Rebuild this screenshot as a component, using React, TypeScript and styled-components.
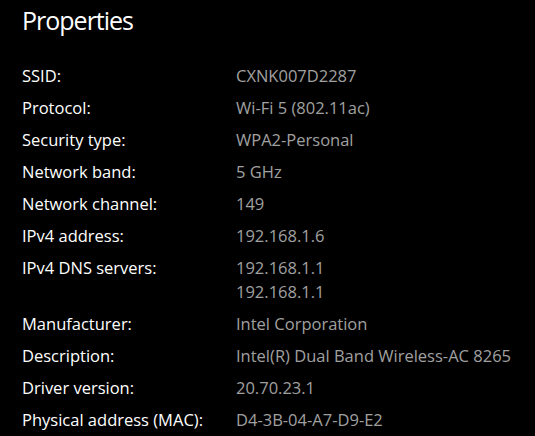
import styled, { createGlobalStyle } from "styled-components";

const GlobalStyle = createGlobalStyle`
  html, body {
    margin: 0;
    padding: 0;
    background: #000;
  }
  body {
    font-family: "Open Sans", "Noto Sans", "Liberation Sans", sans-serif;
  }
`;

const properties: { label: string; values: string[] }[] = [
  { label: "SSID:", values: ["CXNK007D2287"] },
  { label: "Protocol:", values: ["Wi-Fi 5 (802.11ac)"] },
  { label: "Security type:", values: ["WPA2-Personal"] },
  { label: "Network band:", values: ["5 GHz"] },
  { label: "Network channel:", values: ["149"] },
  { label: "IPv4 address:", values: ["192.168.1.6"] },
  { label: "IPv4 DNS servers:", values: ["192.168.1.1", "192.168.1.1"] },
  { label: "Manufacturer:", values: ["Intel Corporation"] },
  { label: "Description:", values: ["Intel(R) Dual Band Wireless-AC 8265"] },
  { label: "Driver version:", values: ["20.70.23.1"] },
  { label: "Physical address (MAC):", values: ["D4-3B-04-A7-D9-E2"] },
];

const App = () => {
  return (
    <>
      <GlobalStyle />
      <Page>
        <Title>Properties</Title>
        <Table>
          {properties.map(({ label, values }) => (
            <Row key={label}>
              <Label>{label}</Label>
              <Values>
                {values.map((v, i) => (
                  <Value key={i}>{v}</Value>
                ))}
              </Values>
            </Row>
          ))}
        </Table>
      </Page>
    </>
  );
};

export default App;

const Page = styled.div`
  width: 535px;
  height: 436px;
  box-sizing: border-box;
  padding: 2px 0 0 22px;
  background: #000;
  overflow: hidden;
`;

const Title = styled.h1`
  margin: 0;
  font-size: 25px;
  font-weight: 400;
  line-height: 36px;
  color: #fff;
  letter-spacing: -1px;
`;

const Table = styled.div`
  display: flex;
  flex-direction: column;
  margin-top: 26px;
`;

const Row = styled.div`
  display: grid;
  grid-template-columns: 214px 1fr;
  padding-bottom: 9px;
`;

const Label = styled.div`
  font-size: 16.5px;
  line-height: 23px;
  color: #fff;
  white-space: nowrap;
`;

const Values = styled.div`
  display: flex;
  flex-direction: column;
  gap: 1px;
`;

const Value = styled.div`
  font-size: 16.5px;
  line-height: 23px;
  color: #a0a0a0;
  white-space: nowrap;
`;
